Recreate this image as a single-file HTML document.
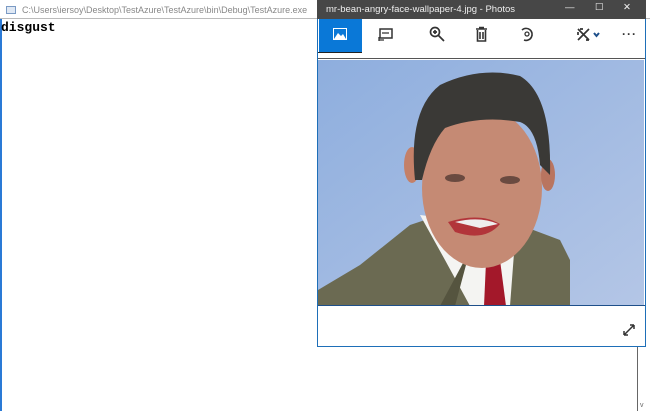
<!DOCTYPE html>
<html><head><meta charset="utf-8"><style>
*{margin:0;padding:0;box-sizing:border-box}
body{width:650px;height:411px;overflow:hidden;background:#fff;position:relative;font-family:"Liberation Sans",sans-serif}
.ct{position:absolute;left:0;top:0;width:650px;height:19px;background:#fff;border-bottom:1px solid #bbb;font-size:9px;color:#888;padding:5px 0 0 22px}
.ci{position:absolute;left:6px;top:6px;width:10px;height:8px;border:1px solid #7a9ac4;background:#dfe8f4}
.txt{position:absolute;left:1px;top:20px;font-family:"Liberation Mono",monospace;font-size:13px;color:#000;font-weight:bold}
.lb{position:absolute;left:0;top:19px;width:2px;height:392px;background:#2a7ad6}
.sb{position:absolute;left:637px;top:19px;width:1px;height:392px;background:#666}
.pw{position:absolute;left:317px;top:0;width:329px;height:347px;border:1px solid #1e6fb8;border-top:none;background:#fff}
.pt{position:absolute;left:317px;top:0;width:329px;height:19px;background:#474747;color:#eee;font-size:9.5px;padding:4px 0 0 9px}
.tb{position:absolute;left:319px;top:19px;width:325px;height:39px;background:#fff}
.sel{position:absolute;left:319px;top:19px;width:43px;height:33px;background:#0a78d7}
.ic{position:absolute;font-size:13px;color:#333}
</style></head><body>
<div class="ct"><div class="ci"></div>C:\Users\iersoy\Desktop\TestAzure\TestAzure\bin\Debug\TestAzure.exe</div>
<div class="lb"></div>
<div class="txt">disgust</div>
<div class="sb"></div>
<div style="position:absolute;left:640px;top:402px;font-size:7px;color:#666">v</div>
<div class="pw"></div>
<div class="pt">mr-bean-angry-face-wallpaper-4.jpg - Photos
<span style="position:absolute;left:248px;top:2px">—</span>
<span style="position:absolute;left:278px;top:2px">☐</span>
<span style="position:absolute;left:306px;top:2px">✕</span></div>
<div class="tb"></div>
<div class="sel"></div>
<div style="position:absolute;left:318px;top:52px;width:44px;height:1px;background:#222"></div>
<div style="position:absolute;left:318px;top:58px;width:327px;height:1px;background:#555"></div>
<svg style="position:absolute;left:333px;top:28px" width="14" height="12"><rect x="0.5" y="0.5" width="13" height="11" fill="none" stroke="#fff"/><path d="M1 11 L5 5 L8 8 L10 6 L13 11Z" fill="#fff"/></svg>
<svg style="position:absolute;left:378px;top:28px" width="15" height="14"><rect x="2" y="1" width="12" height="9" fill="none" stroke="#333" stroke-width="1.5"/><path d="M4 5h7M1 12h5M1 9v4" stroke="#333" stroke-width="1.3"/></svg>
<svg style="position:absolute;left:429px;top:26px" width="16" height="16"><circle cx="6" cy="6" r="4.5" fill="none" stroke="#333" stroke-width="1.7"/><path d="M9 9l6 6M4 6h4M6 4v4" stroke="#333" stroke-width="1.7"/></svg>
<svg style="position:absolute;left:475px;top:26px" width="13" height="16"><path d="M1 3h11M4 1.5h5M2.5 4v11h8V4M5 6v7M8 6v7" stroke="#333" stroke-width="1.6" fill="none"/></svg>
<svg style="position:absolute;left:519px;top:26px" width="16" height="16"><path d="M3 4a6 6 0 1 1 2 10" fill="none" stroke="#333" stroke-width="1.6"/><circle cx="8" cy="8" r="2" fill="none" stroke="#333" stroke-width="1.3"/></svg>
<svg style="position:absolute;left:577px;top:28px" width="24" height="14"><path d="M1 1l11 11M12 1L1 12M3 1h3M1 4v3M9 12h3" stroke="#333" stroke-width="1.7" fill="none"/><path d="M17 5l2.5 3 2.5-3" stroke="#1e4f8a" stroke-width="2" fill="none"/></svg>
<div class="ic" style="left:622px;top:27px;font-size:12px;letter-spacing:1px;font-weight:bold">···</div>
<svg style="position:absolute;left:318px;top:60px" width="326" height="246" viewBox="318 60 326 246">
<defs><linearGradient id="bg" x1="0" y1="0" x2="1" y2="1"><stop offset="0" stop-color="#8eaede"/><stop offset="1" stop-color="#b4c6e6"/></linearGradient></defs>
<rect x="318" y="60" width="326" height="246" fill="url(#bg)"/>
<path d="M318 306 L318 290 L360 265 L410 225 L440 215 L520 225 L560 240 L570 260 L570 306Z" fill="#6b6a52"/>
<path d="M420 215 L445 260 L470 306 L510 306 L515 240 L500 225Z" fill="#f4f4f2"/>
<path d="M486 262 L500 260 L506 306 L484 306Z" fill="#a3182a"/>
<path d="M470 250 L455 306 L440 306Z" fill="#55543f"/>
<ellipse cx="482" cy="188" rx="60" ry="80" fill="#c58a74"/>
<ellipse cx="412" cy="165" rx="8" ry="18" fill="#c48068"/>
<ellipse cx="548" cy="175" rx="7" ry="16" fill="#b97560"/>
<path d="M415 180 Q408 110 440 85 Q480 66 520 76 Q552 95 550 175 L540 165 Q537 128 520 122 Q480 115 445 128 Q430 145 422 180Z" fill="#3a3936"/>
<path d="M448 222 Q480 212 500 224 Q485 242 455 232Z" fill="#b2353a"/>
<path d="M455 222 Q480 216 498 224 L480 228Z" fill="#eee"/>
<ellipse cx="455" cy="178" rx="10" ry="4" fill="#6a4a40"/>
<ellipse cx="510" cy="180" rx="10" ry="4" fill="#6a4a40"/>
</svg>
<div style="position:absolute;left:318px;top:305px;width:327px;height:1px;background:#1e4f8a"></div>
<svg style="position:absolute;left:622px;top:323px" width="14" height="14"><path d="M2 12L12 2M2 12v-4M2 12h4M12 2v4M12 2h-4" stroke="#333" stroke-width="1.5" fill="none"/></svg>
</body></html>
